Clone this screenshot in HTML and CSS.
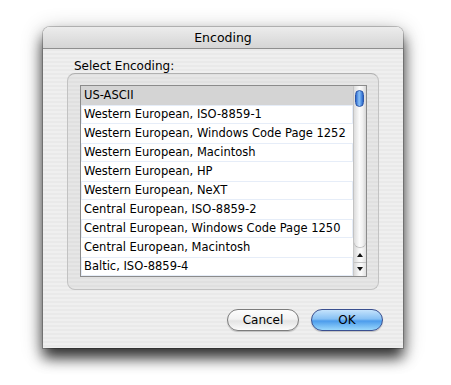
FILE: index.html
```html
<!DOCTYPE html>
<html lang="en">
<head>
    <meta charset="UTF-8">
    <meta name="viewport" content="width=device-width, initial-scale=1.0">
    <title>Encoding</title>
    <link rel="stylesheet" href="styles.css">
</head>
<body>
    <div class="window">
        <div class="titlebar">Encoding</div>
        <div class="content">
            <div class="label">Select Encoding:</div>
            <div class="group">
                <div class="list">
                    <div class="rows">
                        <div class="row selected">US-ASCII</div>
                        <div class="row">Western European, ISO-8859-1</div>
                        <div class="row">Western European, Windows Code Page 1252</div>
                        <div class="row">Western European, Macintosh</div>
                        <div class="row">Western European, HP</div>
                        <div class="row">Western European, NeXT</div>
                        <div class="row">Central European, ISO-8859-2</div>
                        <div class="row">Central European, Windows Code Page 1250</div>
                        <div class="row">Central European, Macintosh</div>
                        <div class="row">Baltic, ISO-8859-4</div>
                    </div>
                    <div class="scrollbar">
                        <div class="track"><div class="thumb"></div></div>
                        <div class="arrow up"></div>
                        <div class="arrow down"></div>
                    </div>
                </div>
            </div>
            <div class="buttons">
                <button class="btn">Cancel</button>
                <button class="btn default">OK</button>
            </div>
        </div>
    </div>
</body>
</html>
```

FILE: styles.css
```css
body {
    margin: 0;
    padding: 27px 0 0 43px;
    box-sizing: border-box;
    min-height: 385px;
    background: #fff;
    font-family: "DejaVu Sans", sans-serif;
    color: #000;
}
.window {
    width: 360px;
    border-radius: 7px 7px 0 0;
    background: repeating-linear-gradient(#efefef 0 2px, #e9e9e9 2px 4px);
    box-shadow: 0 0 0 1px rgba(0,0,0,0.2), 0 10px 14px rgba(0,0,0,0.75), 0 4px 22px rgba(0,0,0,0.3);
}
.titlebar {
    height: 21px;
    line-height: 21px;
    text-align: center;
    font-size: 12.5px;
    border-radius: 7px 7px 0 0;
    background: linear-gradient(#ececec, #d5d5d5);
    border-bottom: 1px solid #8f8f8f;
}
.content {
    padding: 10px 20px 17px 24px;
}
.label {
    font-size: 12px;
    line-height: 14px;
    padding-left: 7px;
}
.group {
    margin-right: 4px;
    padding: 11px 11px 12px 12px;
    border: 1px solid #c2c2c2;
    border-top-color: #b0b0b0;
    border-radius: 8px;
    background: rgba(0,0,0,0.035);
}
.list {
    display: flex;
    height: 190px;
    border: 1px solid #8b8b8b;
    background: #fff;
    overflow: hidden;
}
.rows {
    flex: 1;
}
.row {
    height: 19px;
    line-height: 19px;
    padding-left: 3px;
    font-size: 11.5px;
    white-space: nowrap;
    box-shadow: inset 0 0 0 1px #e6edf8;
}
.row:nth-child(odd) {
    box-shadow: none;
}
.row.selected {
    background: #d4d4d4;
}
.scrollbar {
    width: 12px;
    display: flex;
    flex-direction: column;
    background: linear-gradient(90deg, #d8d8d8, #f6f6f6 40%, #fafafa 60%, #e2e2e2);
    border-left: 1px solid #c8c8c8;
}
.track {
    flex: 1;
    padding-top: 4px;
    border-radius: 0 0 6px 6px;
    background: linear-gradient(90deg, #dcdcdc, #fbfbfb 45%, #f2f2f2 70%, #d6d6d6);
    box-shadow: 0 1px 1px rgba(0,0,0,0.25);
}
.thumb {
    width: 9px;
    height: 17px;
    margin-left: 1px;
    border-radius: 5px;
    border: 1px solid #2c56a8;
    box-sizing: border-box;
    background: linear-gradient(90deg, #2f6bd0, #8cc2f6 45%, #5a9ae8 70%, #2a62c4);
}
.arrow {
    height: 13px;
    position: relative;
}
.arrow.up {
    margin-top: 2px;
    border-bottom: 1px solid #c4c4c4;
}
.arrow::after {
    content: "";
    position: absolute;
    left: 3px;
    top: 4px;
    border-left: 3px solid transparent;
    border-right: 3px solid transparent;
}
.arrow.up::after {
    border-bottom: 4px solid #111;
}
.arrow.down::after {
    border-top: 4px solid #111;
}
.buttons {
    display: flex;
    justify-content: flex-end;
    gap: 12px;
    margin-top: 19px;
}
.btn {
    width: 72px;
    height: 22px;
    padding: 0;
    font-family: "DejaVu Sans", sans-serif;
    font-size: 12px;
    color: #000;
    border-radius: 11px;
    border: 1px solid #7c7c7c;
    background: linear-gradient(#fdfdfd, #f2f2f2 45%, #e4e4e4 55%, #fbfbfb);
    box-shadow: 0 1px 1px rgba(0,0,0,0.2);
}
.btn.default {
    border-color: #3a4f8f;
    background: linear-gradient(#c4e3fc, #86c0f4 45%, #4c9cec 55%, #9ad8fc);
}
```
